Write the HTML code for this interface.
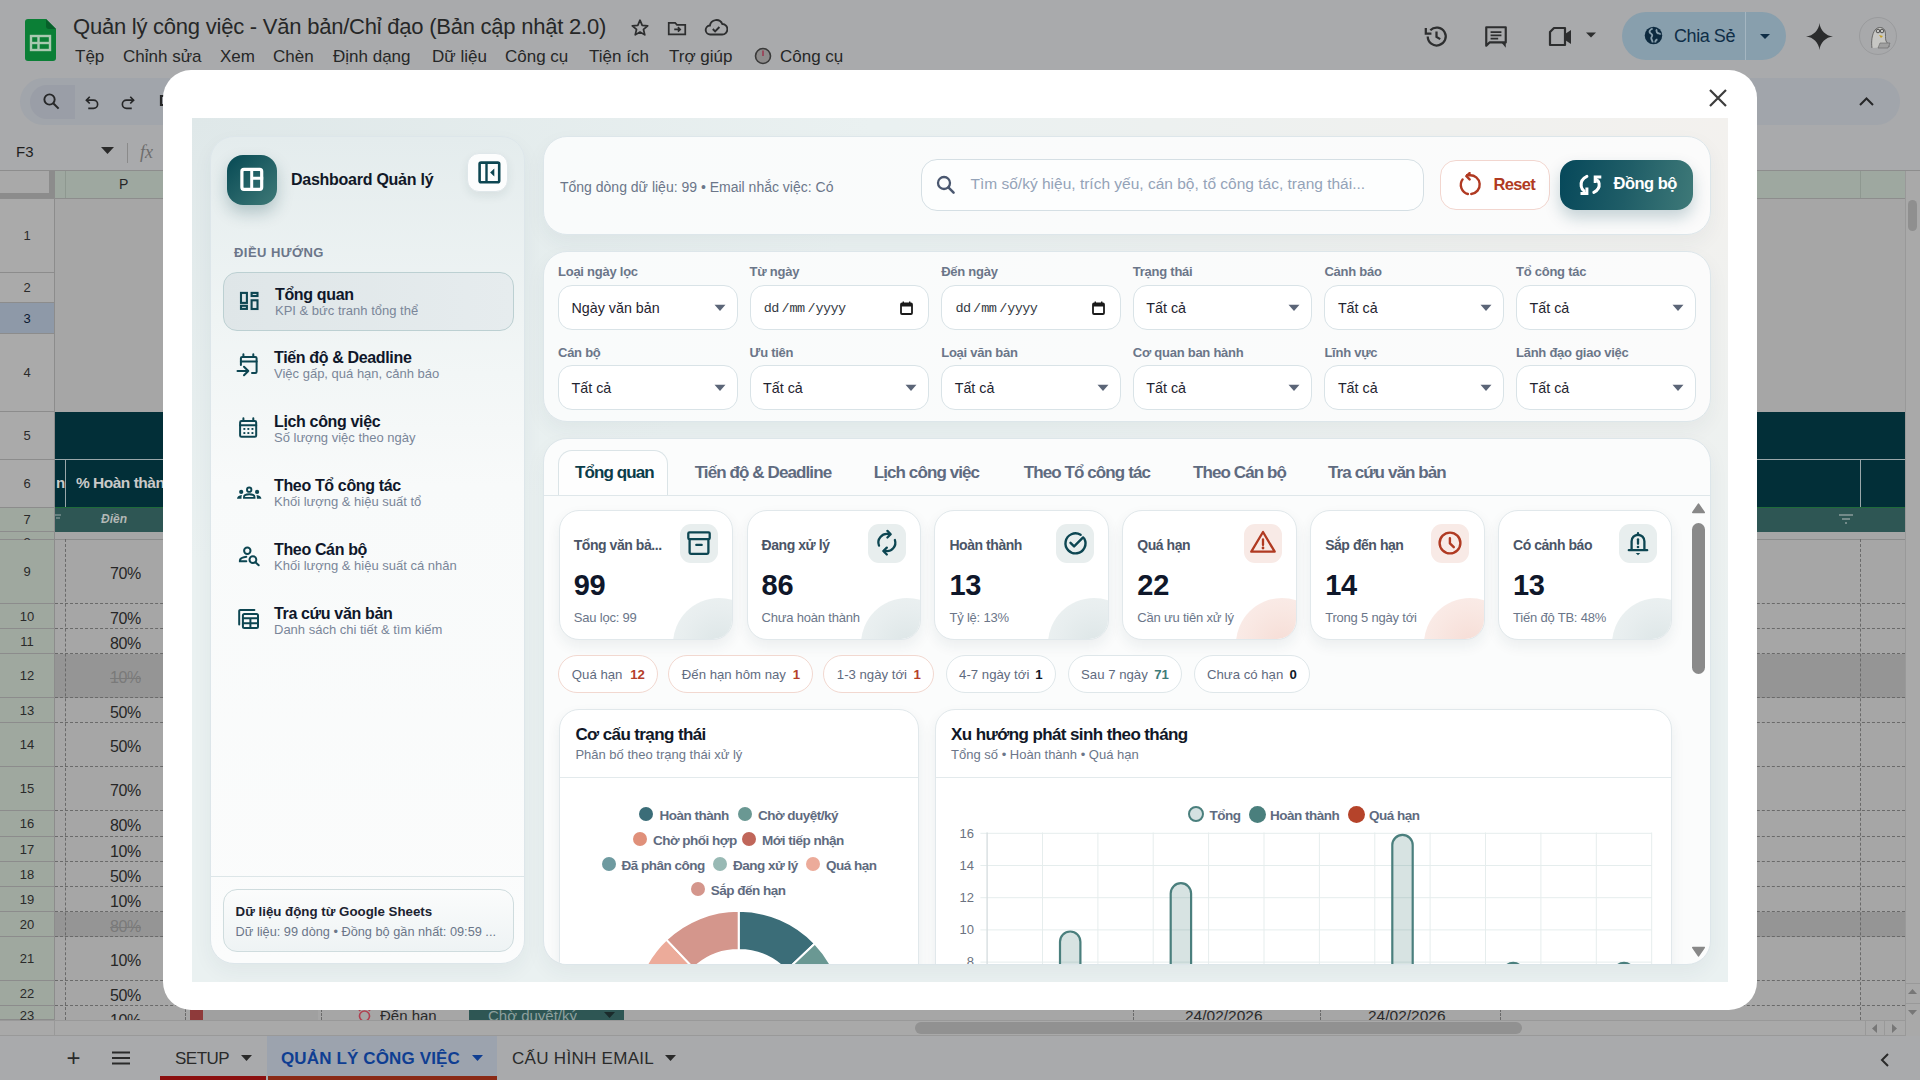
<!DOCTYPE html>
<html><head><meta charset="utf-8">
<style>
*{box-sizing:border-box;margin:0;padding:0}
html,body{width:1920px;height:1080px;overflow:hidden;font-family:"Liberation Sans",sans-serif;background:#a9aaac}
.a{position:absolute}
.t{position:absolute;white-space:nowrap}
#bg{position:absolute;left:0;top:0;width:1920px;height:1080px;background:#a9aaac;overflow:hidden}
.menu{font-size:17px;color:#262727}
#modal{position:absolute;left:163px;top:70px;width:1594px;height:940px;background:#fff;border-radius:28px;overflow:hidden}
#inner{position:absolute;left:29px;top:48px;width:1536px;height:864px;background:radial-gradient(800px 520px at 0% 0%,rgba(223,232,233,1),rgba(223,232,233,0) 85%),radial-gradient(1000px 660px at 100% 0%,rgba(243,241,238,1),rgba(243,241,238,0) 85%),#eaf1f1;overflow:hidden}
.card{position:absolute;border-radius:24px;border:1px solid #dde6ea;box-shadow:0 8px 20px rgba(30,60,70,.05)}
#side{left:18px;top:18px;width:315px;height:828px;background:linear-gradient(180deg,#e4eced 0%,#eff4f4 22%,#f8fafa 42%,#fbfcfc 100%)}
.logo{position:absolute;left:16px;top:18px;width:50px;height:50px;border-radius:16px;background:linear-gradient(135deg,#064954 0%,#3f7977 100%);box-shadow:0 8px 16px rgba(20,70,80,.25)}
.collapse{position:absolute;left:256px;top:16px;width:40.5px;height:39px;border-radius:12px;background:#fcfdfd;border:1px solid #dfe7ea;box-shadow:0 4px 10px rgba(30,60,70,.08)}
.navh{position:absolute;left:23px;top:108px;font-size:13px;font-weight:bold;letter-spacing:0.45px;color:#6b7689}
.nav{position:absolute;left:12px;width:291px;height:59px;border-radius:14px}
.nav.act{background:linear-gradient(90deg,#dfe6e8,#e6ecee);border:1px solid #bcd0d2}
.nav svg{position:absolute;left:16px;top:18px}
.nav .nt{position:absolute;left:51px;top:12.5px;font-size:16px;font-weight:bold;letter-spacing:-0.35px;color:#0f172a;white-space:nowrap}
.nav .ns{position:absolute;left:51px;top:29.5px;font-size:13px;color:#7a8699;white-space:nowrap}
.sfoot{position:absolute;left:0;top:739px;width:313px;height:1px;background:#dde6e8}
.fcard{position:absolute;left:12px;top:752px;width:291px;height:63px;border-radius:14px;border:1px solid #cfdcde;background:linear-gradient(180deg,#fbfcfc,#eef3f4)}
#topc{left:351px;top:18px;width:1168px;height:99px;background:linear-gradient(90deg,#f9fbfb,#fbfbfb)}
#filt{left:351px;top:133px;width:1168px;height:171px;background:linear-gradient(90deg,#f9fbfb,#fbfbfb)}
#tabs{left:351px;top:320px;width:1168px;height:527px;background:#fbfcfc;overflow:hidden}
.flab{position:absolute;font-size:13px;font-weight:bold;letter-spacing:-0.25px;color:#6b7689;white-space:nowrap}
.sel{position:absolute;width:179.6px;height:45px;border-radius:14px;border:1px solid #d9e3e7;background:#fff}
.sel .v{position:absolute;left:12.5px;top:13.5px;font-size:14.3px;color:#1f2430;white-space:nowrap}
.sel .ar{position:absolute;right:11px;top:18px}
.tab{position:absolute;top:23.7px;font-size:17px;font-weight:bold;letter-spacing:-0.9px;color:#5f6b80;white-space:nowrap}
.kpi{position:absolute;top:72px;width:174.4px;height:130px;border-radius:20px;background:#fff;border:1px solid #e1e8eb;box-shadow:0 6px 14px rgba(30,60,70,.07);overflow:hidden}
.kpi .kt{position:absolute;left:14px;top:26px;font-size:14px;font-weight:bold;letter-spacing:-0.45px;color:#4b5567;white-space:nowrap}
.kpi .kn{position:absolute;left:14px;top:58.5px;font-size:29px;font-weight:bold;letter-spacing:-0.3px;color:#0f172a}
.kpi .ks{position:absolute;left:14px;top:99.5px;font-size:13px;letter-spacing:-0.2px;color:#6b7689;white-space:nowrap}
.kpi .ki{position:absolute;left:120.3px;top:13px;width:38px;height:39px;border-radius:11px;background:#e8eeee}
.kpi .ki.r{background:#f8eae6}
.kpi .kc{position:absolute;left:113px;top:87px;width:92px;height:92px;border-radius:50%;background:radial-gradient(circle at 50% 50%,#dde6e7 0%,#e8eeef 55%,#eef3f3 100%)}
.kpi .kc.r{background:radial-gradient(circle at 50% 50%,#f6ddd6 0%,#f9e8e3 55%,#fbefec 100%)}
.chip{position:absolute;top:159.2px;height:38px;border-radius:19px;background:#fff;border:1px solid #dfe7ea;font-size:13.2px;color:#5f6b80;white-space:nowrap;padding:0 0 0 12.5px;line-height:38px}
.chip.r{border-color:#f2d8d0}
.chip b{position:absolute;font-weight:bold}
.ccard{position:absolute;top:271px;height:300px;border-radius:20px;background:#fff;border:1px solid #e1e8eb;box-shadow:0 6px 14px rgba(30,60,70,.07)}
.ccard .ct{position:absolute;left:15.5px;top:15px;font-size:17px;font-weight:bold;letter-spacing:-0.6px;color:#111827;white-space:nowrap}
.ccard .cs{position:absolute;left:15.5px;top:37px;font-size:13px;color:#6b7689;white-space:nowrap}
.ccard .sep{position:absolute;left:0;right:0;top:67px;height:1px;background:#e3eaec}
.lg{position:absolute;margin-top:1.5px;font-size:13.5px;font-weight:bold;letter-spacing:-0.5px;color:#5f6b80;white-space:nowrap}
.dot{position:absolute;width:14px;height:14px;border-radius:50%}

</style></head><body>
<div id="bg">
 <!-- header -->
 <svg class="a" style="left:25px;top:19px" width="31" height="42" viewBox="0 0 31 42"><path d="M3 0h18l10 10v29a3 3 0 0 1-3 3H3a3 3 0 0 1-3-3V3a3 3 0 0 1 3-3z" fill="#0b7f36"/><path d="M21 0l10 10H24a3 3 0 0 1-3-3z" fill="#07602a"/><rect x="6" y="17" width="19" height="14" fill="none" stroke="#a9c9b0" stroke-width="2.4"/><line x1="6" y1="24" x2="25" y2="24" stroke="#a9c9b0" stroke-width="2.4"/><line x1="13.5" y1="17" x2="13.5" y2="31" stroke="#a9c9b0" stroke-width="2.4"/></svg>
 <div class="t" style="left:73px;top:13.5px;font-size:22px;letter-spacing:-0.23px;color:#262727">Quản lý công việc - Văn bản/Chỉ đạo (Bản cập nhật 2.0)</div>
 <svg class="a" style="left:629px;top:17px" width="22" height="22" viewBox="0 0 24 24"><path d="M12 3.5l2.4 5.6 6 .5-4.6 4 1.4 5.9L12 16.4l-5.2 3.1 1.4-5.9-4.6-4 6-.5z" fill="none" stroke="#2d2e2f" stroke-width="1.9" stroke-linejoin="round"/></svg>
 <svg class="a" style="left:666px;top:17px" width="22" height="22" viewBox="0 0 24 24"><path d="M3 6.5V19h18V8.5h-9l-2-2z" fill="none" stroke="#2d2e2f" stroke-width="1.9"/><path d="M9 13.5h6M13 11l2.5 2.5L13 16" fill="none" stroke="#2d2e2f" stroke-width="1.8"/></svg>
 <svg class="a" style="left:704px;top:17px" width="24" height="22" viewBox="0 0 24 22"><path d="M6.5 17.5a4.5 4.5 0 0 1-.6-9A6.5 6.5 0 0 1 18.3 7a4.3 4.3 0 0 1-.3 10.5z" fill="none" stroke="#2d2e2f" stroke-width="1.9"/><path d="M8.8 12l2.3 2.3 4.3-4.3" fill="none" stroke="#2d2e2f" stroke-width="1.9"/></svg>
 <div class="t menu" style="left:75px;top:47px">Tệp</div>
 <div class="t menu" style="left:123px;top:47px">Chỉnh sửa</div>
 <div class="t menu" style="left:220px;top:47px">Xem</div>
 <div class="t menu" style="left:273px;top:47px">Chèn</div>
 <div class="t menu" style="left:333px;top:47px">Định dạng</div>
 <div class="t menu" style="left:432px;top:47px">Dữ liệu</div>
 <div class="t menu" style="left:505px;top:47px">Công cụ</div>
 <div class="t menu" style="left:589px;top:47px">Tiện ích</div>
 <div class="t menu" style="left:669px;top:47px">Trợ giúp</div>
 <svg class="a" style="left:754px;top:47px" width="18" height="18" viewBox="0 0 18 18"><circle cx="9" cy="9" r="7.5" fill="#8e8c8c" stroke="#3a3a3a" stroke-width="1.6"/><path d="M9 3.5V9" stroke="#a02040" stroke-width="1.2"/></svg>
 <div class="t menu" style="left:780px;top:47px">Công cụ</div>
 <!-- right icons -->
 <svg class="a" style="left:1423px;top:23px" width="27" height="27" viewBox="0 0 24 24"><path d="M4.2 12a8 8 0 1 0 2.3-5.6" fill="none" stroke="#2d2e2f" stroke-width="2"/><path d="M2.5 4.5v5h5" fill="none" stroke="#2d2e2f" stroke-width="2" stroke-linejoin="miter"/><path d="M12 7.5V12.3l3.3 2" fill="none" stroke="#2d2e2f" stroke-width="2"/></svg>
 <svg class="a" style="left:1483px;top:24px" width="26" height="26" viewBox="0 0 24 24"><path d="M3 3h18v14H6l-3 3z" fill="none" stroke="#2d2e2f" stroke-width="2" stroke-linejoin="round"/><path d="M7 7.5h10M7 10.5h10M7 13.5h7" stroke="#2d2e2f" stroke-width="1.8"/><path d="M21 17v5l-4-5" fill="#2d2e2f"/></svg>
 <svg class="a" style="left:1547px;top:24px" width="28" height="26" viewBox="0 0 28 26"><path d="M3 8l4-4h11v17H3z" fill="none" stroke="#2d2e2f" stroke-width="2.2" stroke-linejoin="round"/><path d="M18 10l6-4v14l-6-4z" fill="#2d2e2f"/></svg>
 <svg class="a" style="left:1585px;top:31px" width="12" height="8" viewBox="0 0 12 8"><path d="M1 1.5h10L6 6.5z" fill="#2d2e2f"/></svg>
 <div class="a" style="left:1622px;top:12px;width:164px;height:48px;border-radius:24px;background:#889fad"></div>
 <div class="a" style="left:1745px;top:12px;width:1px;height:48px;background:#a5b6c1"></div>
 <svg class="a" style="left:1643px;top:25px" width="21" height="21" viewBox="0 0 24 24"><circle cx="12" cy="12" r="10" fill="#0d2a3f"/><path d="M11 4c-2 1-4 2-3.5 4s2.5 1.5 3 3.5-1.5 2-1 4 1.5 2.5 1.5 4.5M15 5c1 1.5 0 3 1.5 4s3 0 3.5 2M14 20c0-2 1-3 2.5-3.5" stroke="#889fad" stroke-width="2.1" fill="none"/></svg>
 <div class="t" style="left:1674px;top:25.5px;font-size:18px;letter-spacing:-0.43px;color:#0f2e47">Chia Sẻ</div>
 <svg class="a" style="left:1759px;top:33px" width="12" height="7" viewBox="0 0 12 7"><path d="M1 1h10L6 6z" fill="#0f2e47"/></svg>
 <svg class="a" style="left:1806px;top:23px" width="27" height="27" viewBox="0 0 24 24"><path d="M12 0C12.6 6.5 17.5 11.4 24 12 17.5 12.6 12.6 17.5 12 24 11.4 17.5 6.5 12.6 0 12 6.5 11.4 11.4 6.5 12 0z" fill="#2b2c2d"/></svg>
 <div class="a" style="left:1859px;top:17px;width:38px;height:38px;border-radius:50%;background:#a8a9ab;border:1px solid #9a9b9d;overflow:hidden">
  <svg width="38" height="38" viewBox="0 0 38 38"><path d="M12 30c-1-6 0-14 3-18 3-4 9-3 10 1 1 4 0 7 1 10 1 2 3 3 3 6" fill="#c7c7c4" stroke="#555" stroke-width=".8"/><circle cx="18" cy="13" r="1.8" fill="none" stroke="#333" stroke-width=".8"/><circle cx="22" cy="13" r="1.8" fill="none" stroke="#333" stroke-width=".8"/><path d="M19 17l4 1-2 2z" fill="#c9a020"/><path d="M20 25h10l-2 5H18z" fill="#a0a0a0" stroke="#666" stroke-width=".6"/></svg>
 </div>
 <!-- toolbar -->
 <div class="a" style="left:20px;top:78px;width:1880px;height:47px;border-radius:24px;background:#a1a5ab"></div>
 <div class="a" style="left:30px;top:85px;width:45px;height:34px;border-radius:17px 0 0 17px;background:#9a9ea7"></div>
 <svg class="a" style="left:42px;top:92px" width="19" height="19" viewBox="0 0 24 24"><circle cx="9.5" cy="9.5" r="6.5" fill="none" stroke="#262728" stroke-width="2.4"/><path d="M14.5 14.5l6.5 6.5" stroke="#262728" stroke-width="2.6"/></svg>
 <svg class="a" style="left:83px;top:93px" width="18" height="18" viewBox="0 0 24 24"><path d="M9 5L4.5 9.5 9 14" fill="none" stroke="#262728" stroke-width="2.2"/><path d="M5 9.5h9a5.5 5.5 0 0 1 0 11H7" fill="none" stroke="#262728" stroke-width="2.2"/></svg>
 <svg class="a" style="left:119px;top:93px" width="18" height="18" viewBox="0 0 24 24"><path d="M15 5l4.5 4.5L15 14" fill="none" stroke="#262728" stroke-width="2.2"/><path d="M19 9.5h-9a5.5 5.5 0 0 0 0 11h7" fill="none" stroke="#262728" stroke-width="2.2"/></svg>
 <svg class="a" style="left:158px;top:93px" width="10" height="18" viewBox="0 0 10 18"><path d="M9 3H3v9h6" fill="none" stroke="#262728" stroke-width="2.2"/></svg>
 <svg class="a" style="left:1858px;top:96px" width="17" height="11" viewBox="0 0 17 11"><path d="M2 9l6.5-6.5L15 9" fill="none" stroke="#262728" stroke-width="2"/></svg>
 <!-- formula bar -->
 <div class="t" style="left:16px;top:143px;font-size:15px;color:#1f1f1f">F3</div>
 <svg class="a" style="left:101px;top:147px" width="13" height="8" viewBox="0 0 13 8"><path d="M0 0h13L6.5 7z" fill="#2a2a2a"/></svg>
 <div class="a" style="left:127px;top:143px;width:1px;height:20px;background:#8a8a8a"></div>
 <div class="t" style="left:140px;top:142px;font-size:18px;font-style:italic;font-family:'Liberation Serif',serif;color:#6d6d6d">fx</div>
 <!-- column header -->
 <div class="a" style="left:0;top:170px;width:1920px;height:1px;background:#8d8d8d"></div>
 <div class="a" style="left:0;top:171px;width:49px;height:22px;background:#a9a9a9"></div>
 <div class="a" style="left:49px;top:171px;width:6px;height:28px;background:#8c8c8c"></div>
 <div class="a" style="left:0;top:193px;width:55px;height:6px;background:#8c8c8c"></div>
 <div class="a" style="left:55px;top:171px;width:1850px;height:27px;background:#9ea8a0"></div>
 <div class="a" style="left:65px;top:171px;width:1px;height:27px;background:#8e9890"></div>
 <div class="a" style="left:1860px;top:171px;width:1px;height:27px;background:#8e9890"></div>
 <div class="t" style="left:119px;top:176px;font-size:14px;color:#262626">P</div>
 <div class="a" style="left:0;top:198px;width:1905px;height:1px;background:#8d8d8d"></div>
 <!-- vertical scrollbar -->
 <div class="a" style="left:1905px;top:171px;width:15px;height:865px;background:#a9a9a9;border-left:1px solid #999"></div>
 <div class="a" style="left:1908px;top:200px;width:9px;height:31px;border-radius:5px;background:#8f8f8f"></div>
 <div class="a" style="left:1905px;top:983px;width:15px;height:1px;background:#999"></div>
 <div class="a" style="left:1905px;top:1003px;width:15px;height:1px;background:#999"></div>
 <svg class="a" style="left:1908px;top:989px" width="9" height="6"><path d="M0 5h9L4.5 0z" fill="#777"/></svg>
 <svg class="a" style="left:1908px;top:1010px" width="9" height="6"><path d="M0 0h9L4.5 5z" fill="#777"/></svg>
 <div class="a" style="left:0;top:199px;width:54px;height:74px;background:#aaaaaa;border-bottom:1px solid #8c8c8c"></div>
<div class="t rnl" style="left:0;top:199px;width:54px;height:74px;line-height:74px;text-align:center;font-size:13px;color:#2a2a2a">1</div>
<div class="a" style="left:55px;top:199px;width:1850px;height:74px;background:#a6a6a6;"></div>
<div class="a" style="left:0;top:273px;width:54px;height:30px;background:#aaaaaa;border-bottom:1px solid #8c8c8c"></div>
<div class="t rnl" style="left:0;top:273px;width:54px;height:30px;line-height:30px;text-align:center;font-size:13px;color:#2a2a2a">2</div>
<div class="a" style="left:55px;top:273px;width:1850px;height:30px;background:#a6a6a6;"></div>
<div class="a" style="left:0;top:303px;width:54px;height:31px;background:#8e99a8;border-bottom:1px solid #8c8c8c"></div>
<div class="t rnl" style="left:0;top:303px;width:54px;height:31px;line-height:31px;text-align:center;font-size:13px;color:#0d1a33">3</div>
<div class="a" style="left:55px;top:303px;width:1850px;height:31px;background:#a6a6a6;"></div>
<div class="a" style="left:0;top:334px;width:54px;height:78px;background:#aaaaaa;border-bottom:1px solid #8c8c8c"></div>
<div class="t rnl" style="left:0;top:334px;width:54px;height:78px;line-height:78px;text-align:center;font-size:13px;color:#2a2a2a">4</div>
<div class="a" style="left:55px;top:334px;width:1850px;height:78px;background:#a6a6a6;"></div>
<div class="a" style="left:0;top:412px;width:54px;height:48px;background:#aaaaaa;border-bottom:1px solid #8c8c8c"></div>
<div class="t rnl" style="left:0;top:412px;width:54px;height:48px;line-height:48px;text-align:center;font-size:13px;color:#2a2a2a">5</div>
<div class="a" style="left:55px;top:412px;width:1850px;height:48px;background:#022f38;border-bottom:1px solid #9aa7aa;"></div>
<div class="a" style="left:0;top:460px;width:54px;height:48px;background:#aaaaaa;border-bottom:1px solid #8c8c8c"></div>
<div class="t rnl" style="left:0;top:460px;width:54px;height:48px;line-height:48px;text-align:center;font-size:13px;color:#2a2a2a">6</div>
<div class="a" style="left:55px;top:460px;width:1850px;height:48px;background:#022f38;border-bottom:1px solid #1f6b3a;"></div>
<div class="a" style="left:0;top:508px;width:54px;height:24px;background:#9fa89f;border-bottom:1px solid #8c8c8c"></div>
<div class="t rnl" style="left:0;top:508px;width:54px;height:24px;line-height:24px;text-align:center;font-size:13px;color:#2a2a2a">7</div>
<div class="a" style="left:55px;top:508px;width:1850px;height:24px;background:#2e5654;"></div>
<div class="a" style="left:0;top:532px;width:54px;height:8px;background:#9fa89f;border-bottom:1px solid #8c8c8c"></div>
<div class="t" style="left:0;top:532px;width:54px;height:8px;overflow:hidden;text-align:center;font-size:13px;color:#2a2a2a;line-height:22px">8</div>
<div class="a" style="left:55px;top:532px;width:1850px;height:8px;background:#a6a6a6;border-bottom:1px solid #8c8c8c;"></div>
<div class="a" style="left:0;top:540px;width:54px;height:64px;background:#9fa89f;border-bottom:1px solid #8c8c8c"></div>
<div class="t rnl" style="left:0;top:540px;width:54px;height:64px;line-height:64px;text-align:center;font-size:13px;color:#2a2a2a">9</div>
<div class="a" style="left:55px;top:540px;width:1850px;height:64px;background:#a6a6a6;border-bottom:1px dashed #6a6a6a;"></div>
<div class="t" style="left:77px;top:541.5px;width:97px;height:64px;overflow:hidden;line-height:64px;text-align:center;font-size:16px;letter-spacing:-0.4px;color:#262626;">70%</div>
<div class="a" style="left:0;top:604px;width:54px;height:25px;background:#9fa89f;border-bottom:1px solid #8c8c8c"></div>
<div class="t rnl" style="left:0;top:604px;width:54px;height:25px;line-height:25px;text-align:center;font-size:13px;color:#2a2a2a">10</div>
<div class="a" style="left:55px;top:604px;width:1850px;height:25px;background:#a6a6a6;border-bottom:1px dashed #6a6a6a;"></div>
<div class="t" style="left:77px;top:605.5px;width:97px;height:25px;overflow:hidden;line-height:25px;text-align:center;font-size:16px;letter-spacing:-0.4px;color:#262626;">70%</div>
<div class="a" style="left:0;top:629px;width:54px;height:25px;background:#9fa89f;border-bottom:1px solid #8c8c8c"></div>
<div class="t rnl" style="left:0;top:629px;width:54px;height:25px;line-height:25px;text-align:center;font-size:13px;color:#2a2a2a">11</div>
<div class="a" style="left:55px;top:629px;width:1850px;height:25px;background:#a6a6a6;border-bottom:1px dashed #6a6a6a;"></div>
<div class="t" style="left:77px;top:630.5px;width:97px;height:25px;overflow:hidden;line-height:25px;text-align:center;font-size:16px;letter-spacing:-0.4px;color:#262626;">80%</div>
<div class="a" style="left:0;top:654px;width:54px;height:44px;background:#9fa89f;border-bottom:1px solid #8c8c8c"></div>
<div class="t rnl" style="left:0;top:654px;width:54px;height:44px;line-height:44px;text-align:center;font-size:13px;color:#2a2a2a">12</div>
<div class="a" style="left:55px;top:654px;width:1850px;height:44px;background:#959595;border-bottom:1px dashed #6a6a6a;"></div>
<div class="t" style="left:77px;top:655.5px;width:97px;height:44px;overflow:hidden;line-height:44px;text-align:center;font-size:16px;letter-spacing:-0.4px;text-decoration:line-through;color:#7a7a7a;">10%</div>
<div class="a" style="left:0;top:698px;width:54px;height:25px;background:#9fa89f;border-bottom:1px solid #8c8c8c"></div>
<div class="t rnl" style="left:0;top:698px;width:54px;height:25px;line-height:25px;text-align:center;font-size:13px;color:#2a2a2a">13</div>
<div class="a" style="left:55px;top:698px;width:1850px;height:25px;background:#a6a6a6;border-bottom:1px dashed #6a6a6a;"></div>
<div class="t" style="left:77px;top:699.5px;width:97px;height:25px;overflow:hidden;line-height:25px;text-align:center;font-size:16px;letter-spacing:-0.4px;color:#262626;">50%</div>
<div class="a" style="left:0;top:723px;width:54px;height:44px;background:#9fa89f;border-bottom:1px solid #8c8c8c"></div>
<div class="t rnl" style="left:0;top:723px;width:54px;height:44px;line-height:44px;text-align:center;font-size:13px;color:#2a2a2a">14</div>
<div class="a" style="left:55px;top:723px;width:1850px;height:44px;background:#a6a6a6;border-bottom:1px dashed #6a6a6a;"></div>
<div class="t" style="left:77px;top:724.5px;width:97px;height:44px;overflow:hidden;line-height:44px;text-align:center;font-size:16px;letter-spacing:-0.4px;color:#262626;">50%</div>
<div class="a" style="left:0;top:767px;width:54px;height:44px;background:#9fa89f;border-bottom:1px solid #8c8c8c"></div>
<div class="t rnl" style="left:0;top:767px;width:54px;height:44px;line-height:44px;text-align:center;font-size:13px;color:#2a2a2a">15</div>
<div class="a" style="left:55px;top:767px;width:1850px;height:44px;background:#a6a6a6;border-bottom:1px dashed #6a6a6a;"></div>
<div class="t" style="left:77px;top:768.5px;width:97px;height:44px;overflow:hidden;line-height:44px;text-align:center;font-size:16px;letter-spacing:-0.4px;color:#262626;">70%</div>
<div class="a" style="left:0;top:811px;width:54px;height:26px;background:#9fa89f;border-bottom:1px solid #8c8c8c"></div>
<div class="t rnl" style="left:0;top:811px;width:54px;height:26px;line-height:26px;text-align:center;font-size:13px;color:#2a2a2a">16</div>
<div class="a" style="left:55px;top:811px;width:1850px;height:26px;background:#a6a6a6;border-bottom:1px dashed #6a6a6a;"></div>
<div class="t" style="left:77px;top:812.5px;width:97px;height:26px;overflow:hidden;line-height:26px;text-align:center;font-size:16px;letter-spacing:-0.4px;color:#262626;">80%</div>
<div class="a" style="left:0;top:837px;width:54px;height:25px;background:#9fa89f;border-bottom:1px solid #8c8c8c"></div>
<div class="t rnl" style="left:0;top:837px;width:54px;height:25px;line-height:25px;text-align:center;font-size:13px;color:#2a2a2a">17</div>
<div class="a" style="left:55px;top:837px;width:1850px;height:25px;background:#a6a6a6;border-bottom:1px dashed #6a6a6a;"></div>
<div class="t" style="left:77px;top:838.5px;width:97px;height:25px;overflow:hidden;line-height:25px;text-align:center;font-size:16px;letter-spacing:-0.4px;color:#262626;">10%</div>
<div class="a" style="left:0;top:862px;width:54px;height:25px;background:#9fa89f;border-bottom:1px solid #8c8c8c"></div>
<div class="t rnl" style="left:0;top:862px;width:54px;height:25px;line-height:25px;text-align:center;font-size:13px;color:#2a2a2a">18</div>
<div class="a" style="left:55px;top:862px;width:1850px;height:25px;background:#a6a6a6;border-bottom:1px dashed #6a6a6a;"></div>
<div class="t" style="left:77px;top:863.5px;width:97px;height:25px;overflow:hidden;line-height:25px;text-align:center;font-size:16px;letter-spacing:-0.4px;color:#262626;">50%</div>
<div class="a" style="left:0;top:887px;width:54px;height:25px;background:#9fa89f;border-bottom:1px solid #8c8c8c"></div>
<div class="t rnl" style="left:0;top:887px;width:54px;height:25px;line-height:25px;text-align:center;font-size:13px;color:#2a2a2a">19</div>
<div class="a" style="left:55px;top:887px;width:1850px;height:25px;background:#a6a6a6;border-bottom:1px dashed #6a6a6a;"></div>
<div class="t" style="left:77px;top:888.5px;width:97px;height:25px;overflow:hidden;line-height:25px;text-align:center;font-size:16px;letter-spacing:-0.4px;color:#262626;">10%</div>
<div class="a" style="left:0;top:912px;width:54px;height:25px;background:#9fa89f;border-bottom:1px solid #8c8c8c"></div>
<div class="t rnl" style="left:0;top:912px;width:54px;height:25px;line-height:25px;text-align:center;font-size:13px;color:#2a2a2a">20</div>
<div class="a" style="left:55px;top:912px;width:1850px;height:25px;background:#959595;border-bottom:1px dashed #6a6a6a;"></div>
<div class="t" style="left:77px;top:913.5px;width:97px;height:25px;overflow:hidden;line-height:25px;text-align:center;font-size:16px;letter-spacing:-0.4px;text-decoration:line-through;color:#7a7a7a;">80%</div>
<div class="a" style="left:0;top:937px;width:54px;height:44px;background:#9fa89f;border-bottom:1px solid #8c8c8c"></div>
<div class="t rnl" style="left:0;top:937px;width:54px;height:44px;line-height:44px;text-align:center;font-size:13px;color:#2a2a2a">21</div>
<div class="a" style="left:55px;top:937px;width:1850px;height:44px;background:#a6a6a6;border-bottom:1px dashed #6a6a6a;"></div>
<div class="t" style="left:77px;top:938.5px;width:97px;height:44px;overflow:hidden;line-height:44px;text-align:center;font-size:16px;letter-spacing:-0.4px;color:#262626;">10%</div>
<div class="a" style="left:0;top:981px;width:54px;height:25px;background:#9fa89f;border-bottom:1px solid #8c8c8c"></div>
<div class="t rnl" style="left:0;top:981px;width:54px;height:25px;line-height:25px;text-align:center;font-size:13px;color:#2a2a2a">22</div>
<div class="a" style="left:55px;top:981px;width:1850px;height:25px;background:#a6a6a6;border-bottom:1px dashed #6a6a6a;"></div>
<div class="t" style="left:77px;top:982.5px;width:97px;height:25px;overflow:hidden;line-height:25px;text-align:center;font-size:16px;letter-spacing:-0.4px;color:#262626;">50%</div>
<div class="a" style="left:0;top:1006px;width:54px;height:14px;background:#9fa89f;border-bottom:1px solid #8c8c8c"></div>
<div class="t rnl" style="left:0;top:1008px;width:54px;text-align:center;font-size:13px;color:#2a2a2a;height:12px;overflow:hidden">23</div>
<div class="a" style="left:55px;top:1006px;width:1850px;height:14px;background:#a6a6a6;"></div>
<div class="t" style="left:77px;top:1007.5px;width:97px;height:12.5px;overflow:hidden;line-height:25px;text-align:center;font-size:16px;letter-spacing:-0.4px;color:#262626;">10%</div>
<div class="a" style="left:54px;top:199px;width:1px;height:821px;background:#8c8c8c"></div>
<div class="a" style="left:65px;top:539px;width:0;height:481px;border-left:1px dashed #6a6a6a"></div>
<div class="a" style="left:1860px;top:539px;width:0;height:481px;border-left:1px dashed #6a6a6a"></div>
<div class="a" style="left:65px;top:459px;width:1px;height:48px;background:#9aa7aa"></div>
<div class="a" style="left:1860px;top:459px;width:1px;height:48px;background:#9aa7aa"></div>
<div class="t" style="left:56px;top:474px;font-size:15px;font-weight:bold;color:#c9c9c9">n</div>
<div class="t" style="left:76px;top:474px;font-size:15.5px;font-weight:bold;letter-spacing:-0.5px;color:#c9c9c9">% Hoàn thàn</div>
<div class="t" style="left:101px;top:512px;font-size:12px;font-weight:bold;font-style:italic;color:#b3b8b6">Điền</div>
<svg class="a" style="left:55px;top:514px" width="6" height="8"><path d="M0 1h6M1 4h4" stroke="#9aa" stroke-width="1.2"/></svg>
<svg class="a" style="left:1839px;top:514px" width="14" height="10"><path d="M0 1h14M3 5h8M6 9h2" stroke="#8a9c9a" stroke-width="1.5"/></svg>
<div class="a" style="left:190px;top:1008px;width:13px;height:12px;background:#8e3a3a"></div>
<div class="a" style="left:203px;top:1008px;width:115px;height:12px;background:#a0a0a0"></div>
<svg class="a" style="left:357px;top:1008px" width="15" height="12"><circle cx="7.5" cy="8" r="5" fill="none" stroke="#b04050" stroke-width="1.6"/><path d="M2 3l2-2M13 3l-2-2" stroke="#b04050" stroke-width="1.6"/></svg>
<div class="t" style="left:380px;top:1006px;font-size:15px;color:#2a2a2a;height:14px;overflow:hidden;line-height:20px">Đến hạn</div>
<div class="a" style="left:469px;top:1008px;width:155px;height:12px;background:#2e5654"></div>
<div class="t" style="left:488px;top:1006px;font-size:15px;color:#8da09e;height:14px;overflow:hidden;line-height:20px">Chờ duyệt/ký</div>
<svg class="a" style="left:604px;top:1012px" width="11" height="6"><path d="M0 0h11L5.5 6z" fill="#1a2a2a"/></svg>
<div class="t" style="left:1185px;top:1006px;font-size:15.5px;color:#2a2a2a;height:14px;overflow:hidden;line-height:20px">24/02/2026</div>
<div class="t" style="left:1368px;top:1006px;font-size:15.5px;color:#2a2a2a;height:14px;overflow:hidden;line-height:20px">24/02/2026</div>
<div class="a" style="left:185px;top:1005px;width:0;height:15px;border-left:1px dashed #6a6a6a"></div>
<div class="a" style="left:321px;top:1005px;width:0;height:15px;border-left:1px dashed #6a6a6a"></div>
<div class="a" style="left:1133px;top:1005px;width:0;height:15px;border-left:1px dashed #6a6a6a"></div>
<div class="a" style="left:1320px;top:1005px;width:0;height:15px;border-left:1px dashed #6a6a6a"></div>
<div class="a" style="left:1500px;top:1005px;width:0;height:15px;border-left:1px dashed #6a6a6a"></div>

 <!-- horizontal scrollbar -->
 <div class="a" style="left:0;top:1020px;width:1905px;height:16px;background:#a9a9a9;border-top:1px solid #999;border-bottom:1px solid #999"></div>
 <div class="a" style="left:54px;top:1021px;width:1px;height:14px;background:#999"></div>
 <div class="a" style="left:915px;top:1022px;width:607px;height:12px;border-radius:6px;background:#919191"></div>
 <div class="a" style="left:1865px;top:1021px;width:1px;height:14px;background:#999"></div>
 <div class="a" style="left:1884px;top:1021px;width:1px;height:14px;background:#999"></div>
 <svg class="a" style="left:1872px;top:1024px" width="6" height="9"><path d="M5 0v9L0 4.5z" fill="#777"/></svg>
 <svg class="a" style="left:1892px;top:1024px" width="6" height="9"><path d="M0 0v9l5-4.5z" fill="#777"/></svg>
 <!-- tabs -->
 <div class="t" style="left:66.5px;top:1044px;font-size:24px;color:#2a2a2a;font-weight:300">+</div>
 <svg class="a" style="left:112px;top:1051px" width="18" height="14"><path d="M0 1.5h18M0 7h18M0 12.5h18" stroke="#2a2a2a" stroke-width="2"/></svg>
 <div class="t" style="left:175px;top:1049px;font-size:17px;color:#2a2a2a;letter-spacing:-0.5px">SETUP</div>
 <svg class="a" style="left:241px;top:1055px" width="11" height="6"><path d="M0 0h11L5.5 6z" fill="#2a2a2a"/></svg>
 <div class="a" style="left:160px;top:1076px;width:106px;height:4px;background:#8b0f0f"></div>
 <div class="a" style="left:267px;top:1036px;width:230px;height:40px;background:#9ca3ae"></div>
 <div class="a" style="left:268px;top:1076px;width:229px;height:4px;background:#8a2a16"></div>
 <div class="t" style="left:281px;top:1049px;font-size:17px;color:#0f3e92;font-weight:bold;letter-spacing:.14px">QUẢN LÝ CÔNG VIỆC</div>
 <svg class="a" style="left:472px;top:1055px" width="11" height="6"><path d="M0 0h11L5.5 6z" fill="#0f3e92"/></svg>
 <div class="t" style="left:512px;top:1049px;font-size:17px;color:#2a2a2a;letter-spacing:.3px">CẤU HÌNH EMAIL</div>
 <svg class="a" style="left:665px;top:1055px" width="11" height="6"><path d="M0 0h11L5.5 6z" fill="#2a2a2a"/></svg>
 <svg class="a" style="left:1880px;top:1053px" width="9" height="14"><path d="M8 1L2 7l6 6" fill="none" stroke="#2a2a2a" stroke-width="2"/></svg>
</div>

<div id="modal">
<svg class="a" style="left:1545px;top:18px" width="20" height="20" viewBox="0 0 20 20"><path d="M2 2l16 16M18 2L2 18" stroke="#3c3c3c" stroke-width="2.2"/></svg>
<div id="inner">
<!-- SIDEBAR -->
<div class="card" id="side">
 <div class="logo"><svg class="a" style="left:0;top:0" width="50" height="50" viewBox="0 0 50 50"><rect x="14.9" y="14.4" width="19.8" height="19.9" rx="2" fill="none" stroke="#fff" stroke-width="3.2"/><path d="M24.7 13v22.8M24.7 23.3h11.5" stroke="#fff" stroke-width="3"/></svg></div>
 <div class="t" style="left:80px;top:34px;font-size:16px;font-weight:bold;letter-spacing:-0.26px;color:#111827">Dashboard Quản lý</div>
 <div class="collapse"><svg class="a" style="left:10px;top:7px" width="24" height="24" viewBox="0 0 24 24"><rect x="1.6" y="1.6" width="19.6" height="19.6" rx="1.5" fill="none" stroke="#0d4652" stroke-width="2.6"/><path d="M8.5 1.5v20" stroke="#0d4652" stroke-width="2.4"/><path d="M16.3 7.6v7.8l-4.2-3.9z" fill="#0d4652"/></svg></div>
 <div class="navh">ĐIỀU HƯỚNG</div>
 <div class="nav act" style="top:135px">
  <svg width="24" height="24" viewBox="0 0 24 24" style="left:15px;top:17px"><g fill="none" stroke="#0d4652" stroke-width="2.1"><rect x="2" y="2.9" width="5.9" height="10"/><rect x="12.6" y="2.9" width="5.9" height="3.1"/><rect x="2" y="15.8" width="5.9" height="3.1"/><rect x="12.6" y="10.3" width="5.9" height="8.7"/></g></svg>
  <div class="nt">Tổng quan</div><div class="ns">KPI &amp; bức tranh tổng thể</div>
 </div>
 <div class="nav" style="top:199px">
  <svg width="24" height="26" viewBox="0 0 24 26" style="left:13px;top:16px"><g fill="none" stroke="#0d4652" stroke-width="2" stroke-linecap="round" stroke-linejoin="round"><path d="M4.9 13V6.3a1.3 1.3 0 0 1 1.3-1.3h13.1a1.3 1.3 0 0 1 1.3 1.3v13.4a1.3 1.3 0 0 1-1.3 1.3H16"/><path d="M4.9 9.6h15.7M7.4 2.3v2.5M17.3 2.3v2.5"/><path d="M1.5 19H12.3M8 14.7L12.3 19L8 23.3"/></g></svg>
  <div class="nt">Tiến độ &amp; Deadline</div><div class="ns">Việc gấp, quá hạn, cảnh báo</div>
 </div>
 <div class="nav" style="top:263px">
  <svg width="24" height="24" viewBox="0 0 24 24" style="left:15px;top:16px"><g fill="none" stroke="#0d4652" stroke-width="2" stroke-linecap="round"><rect x="2.1" y="5" width="16.1" height="15.8" rx="1.4"/><path d="M2.1 9.3h16.1M5.4 2.2v2.6M15.3 2.2v2.6"/></g><g fill="#0d4652"><rect x="5.4" y="12" width="1.9" height="1.9"/><rect x="9.4" y="12" width="1.9" height="1.9"/><rect x="13.5" y="12" width="1.9" height="1.9"/><rect x="5.4" y="16.1" width="1.9" height="1.9"/><rect x="9.4" y="16.1" width="1.9" height="1.9"/><rect x="13.5" y="16.1" width="1.9" height="1.9"/></g></svg>
  <div class="nt">Lịch công việc</div><div class="ns">Số lượng việc theo ngày</div>
 </div>
 <div class="nav" style="top:327px">
  <svg width="28" height="24" viewBox="0 0 28 24" style="left:13px;top:16px"><g fill="#0d4652"><circle cx="5.2" cy="11.9" r="2.1"/><circle cx="21.1" cy="11.9" r="2.1"/><path d="M1 18.8C1 17 2.6 15.3 6 15c-.5 1-.5 2.4-.5 3.8z"/><path d="M25.4 18.8c0-1.8-1.6-3.5-5-3.8.5 1 .5 2.4.5 3.8z"/></g><g fill="none" stroke="#0d4652" stroke-width="1.9"><circle cx="13.2" cy="9.7" r="2.2"/><path d="M8 17.9v-.8c0-1.6 2.2-2.8 5.2-2.8s5.3 1.2 5.3 2.8v.8z"/></g></svg>
  <div class="nt">Theo Tổ công tác</div><div class="ns">Khối lượng &amp; hiệu suất tổ</div>
 </div>
 <div class="nav" style="top:391px">
  <svg width="24" height="24" viewBox="0 0 24 24" style="left:15px;top:16px"><g fill="none" stroke="#0d4652" stroke-width="2" stroke-linecap="round"><circle cx="9.3" cy="6.7" r="3.2"/><path d="M8.3 12.8C4.2 13.4 1.9 14.8 1.9 16.6v.7h6.4"/><circle cx="14.9" cy="15.7" r="3.4"/><path d="M17.4 18.2l3.3 3.1"/></g></svg>
  <div class="nt">Theo Cán bộ</div><div class="ns">Khối lượng &amp; hiệu suất cá nhân</div>
 </div>
 <div class="nav" style="top:455px">
  <svg width="24" height="24" viewBox="0 0 24 24" style="left:15px;top:16px"><g fill="none" stroke="#0d4652" stroke-width="2" stroke-linecap="round"><path d="M1.2 16.4V3a1 1 0 0 1 1-1H16.4"/><rect x="4.9" y="6" width="15.1" height="14.1" rx="1.5"/><path d="M4.9 10.3h15.1M4.9 15.2h15.1M12.4 10.3v9.8"/></g></svg>
  <div class="nt">Tra cứu văn bản</div><div class="ns">Danh sách chi tiết &amp; tìm kiếm</div>
 </div>
 <div class="sfoot"></div>
 <div class="fcard">
  <div class="t" style="left:11.6px;top:13.5px;font-size:13.3px;font-weight:bold;color:#1c2230">Dữ liệu động từ Google Sheets</div>
  <div class="t" style="left:11.6px;top:34px;font-size:12.75px;color:#6b7689">Dữ liệu: 99 dòng • Đồng bộ gần nhất: 09:59 ...</div>
 </div>
</div>

<!-- TOP BAR -->
<div class="card" id="topc">
 <div class="t" style="left:16px;top:42px;font-size:14px;color:#6b7689">Tổng dòng dữ liệu: 99 • Email nhắc việc: Có</div>
 <div class="a" style="left:377px;top:22px;width:503px;height:52px;border-radius:16px;border:1px solid #d5dfe4;background:#fdfefe">
  <svg class="a" style="left:13px;top:14px" width="22" height="22" viewBox="0 0 22 22"><circle cx="9" cy="9" r="6" fill="none" stroke="#4b5870" stroke-width="2.3"/><path d="M13.4 13.4l5.2 5.2" stroke="#4b5870" stroke-width="2.5" stroke-linecap="round"/></svg>
  <div class="t" style="left:48.5px;top:15.4px;font-size:15.5px;color:#94a3b8">Tìm số/ký hiệu, trích yếu, cán bộ, tổ công tác, trạng thái...</div>
 </div>
 <div class="a" style="left:896px;top:23px;width:110px;height:50px;border-radius:16px;border:1px solid #f2d6cf;background:#fff">
  <svg class="a" style="left:16px;top:11.3px" width="26" height="26" viewBox="0 0 26 26"><g fill="none" stroke="#b03a22" stroke-width="2.4" stroke-linecap="round" stroke-linejoin="round"><path d="M5.6 7.4A9.4 9.4 0 0 0 10.9 22"/><path d="M14.2 22A9.2 9.2 0 0 0 12.4 3.3H10"/><path d="M12.6 1L9.4 4.2l3.2 3.2"/></g></svg>
  <div class="t" style="left:52.5px;top:14.3px;font-size:16.5px;font-weight:bold;letter-spacing:-0.65px;color:#b03a22">Reset</div>
 </div>
 <div class="a" style="left:1016px;top:23px;width:133px;height:50px;border-radius:16px;background:linear-gradient(100deg,#06485a 0%,#1f5d67 50%,#3e7978 100%);box-shadow:0 8px 16px rgba(10,70,85,.22)">
  <svg class="a" style="left:17px;top:13px" width="27" height="24" viewBox="0 0 27 24"><g fill="none" stroke="#fff" stroke-width="3" stroke-linecap="round" stroke-linejoin="miter"><path d="M9.9 3.4C5.5 5.5 3.6 9.5 4.2 13.2 4.6 15.5 5.7 17.2 7.1 18.1"/><path d="M3.5 20.6H9.9V14.6" stroke-linecap="butt"/><path d="M16.8 19.4C20.8 17.4 22.6 13.7 22.1 10.4 21.8 8.7 20.6 7.2 18.8 6.4"/><path d="M24.3 4.1H18.2V10.1" stroke-linecap="butt"/></g></svg>
  <div class="t" style="left:53.5px;top:14.3px;font-size:16.5px;font-weight:bold;letter-spacing:-0.5px;color:#fff">Đồng bộ</div>
 </div>
</div>

<!-- FILTERS -->
<div class="card" id="filt">
<div class="flab" style="left:14.0px;top:12px">Loại ngày lọc</div>
<div class="sel" style="left:14.0px;top:33px"><div class="v">Ngày văn bản</div><svg class="ar" width="12" height="8" viewBox="0 0 12 8"><path d="M0.5 0.8h11L6 7z" fill="#5b6577"/></svg></div>
<div class="flab" style="left:14.0px;top:92.5px">Cán bộ</div>
<div class="sel" style="left:14.0px;top:113px"><div class="v">Tất cả</div><svg class="ar" width="12" height="8" viewBox="0 0 12 8"><path d="M0.5 0.8h11L6 7z" fill="#5b6577"/></svg></div>
<div class="flab" style="left:205.6px;top:12px">Từ ngày</div>
<div class="sel" style="left:205.6px;top:33px"><div class="t" style="left:13.2px;top:15px;font-size:13.5px;font-family:'Liberation Mono',monospace;letter-spacing:-0.6px;color:#363c45">dd</div><div class="t" style="left:30.8px;top:15px;font-size:13.5px;font-family:'Liberation Mono',monospace;letter-spacing:-0.6px;color:#363c45">/</div><div class="t" style="left:39px;top:15px;font-size:13.5px;font-family:'Liberation Mono',monospace;letter-spacing:-0.6px;color:#363c45">mm</div><div class="t" style="left:57px;top:15px;font-size:13.5px;font-family:'Liberation Mono',monospace;letter-spacing:-0.6px;color:#363c45">/</div><div class="t" style="left:65px;top:15px;font-size:13.5px;font-family:'Liberation Mono',monospace;letter-spacing:-0.6px;color:#363c45">yyyy</div><svg class="a" style="left:149.5px;top:14.5px" width="13" height="14" viewBox="0 0 13 14"><rect x="1" y="2.5" width="11" height="10.5" rx="1" fill="none" stroke="#1a1a1a" stroke-width="1.8"/><rect x="1" y="2.5" width="11" height="3" fill="#1a1a1a"/><path d="M3.3 0.6v2M9.7 0.6v2" stroke="#1a1a1a" stroke-width="1.4"/></svg></div>
<div class="flab" style="left:205.6px;top:92.5px">Ưu tiên</div>
<div class="sel" style="left:205.6px;top:113px"><div class="v">Tất cả</div><svg class="ar" width="12" height="8" viewBox="0 0 12 8"><path d="M0.5 0.8h11L6 7z" fill="#5b6577"/></svg></div>
<div class="flab" style="left:397.2px;top:12px">Đến ngày</div>
<div class="sel" style="left:397.2px;top:33px"><div class="t" style="left:13.2px;top:15px;font-size:13.5px;font-family:'Liberation Mono',monospace;letter-spacing:-0.6px;color:#363c45">dd</div><div class="t" style="left:30.8px;top:15px;font-size:13.5px;font-family:'Liberation Mono',monospace;letter-spacing:-0.6px;color:#363c45">/</div><div class="t" style="left:39px;top:15px;font-size:13.5px;font-family:'Liberation Mono',monospace;letter-spacing:-0.6px;color:#363c45">mm</div><div class="t" style="left:57px;top:15px;font-size:13.5px;font-family:'Liberation Mono',monospace;letter-spacing:-0.6px;color:#363c45">/</div><div class="t" style="left:65px;top:15px;font-size:13.5px;font-family:'Liberation Mono',monospace;letter-spacing:-0.6px;color:#363c45">yyyy</div><svg class="a" style="left:149.5px;top:14.5px" width="13" height="14" viewBox="0 0 13 14"><rect x="1" y="2.5" width="11" height="10.5" rx="1" fill="none" stroke="#1a1a1a" stroke-width="1.8"/><rect x="1" y="2.5" width="11" height="3" fill="#1a1a1a"/><path d="M3.3 0.6v2M9.7 0.6v2" stroke="#1a1a1a" stroke-width="1.4"/></svg></div>
<div class="flab" style="left:397.2px;top:92.5px">Loại văn bản</div>
<div class="sel" style="left:397.2px;top:113px"><div class="v">Tất cả</div><svg class="ar" width="12" height="8" viewBox="0 0 12 8"><path d="M0.5 0.8h11L6 7z" fill="#5b6577"/></svg></div>
<div class="flab" style="left:588.8px;top:12px">Trạng thái</div>
<div class="sel" style="left:588.8px;top:33px"><div class="v">Tất cả</div><svg class="ar" width="12" height="8" viewBox="0 0 12 8"><path d="M0.5 0.8h11L6 7z" fill="#5b6577"/></svg></div>
<div class="flab" style="left:588.8px;top:92.5px">Cơ quan ban hành</div>
<div class="sel" style="left:588.8px;top:113px"><div class="v">Tất cả</div><svg class="ar" width="12" height="8" viewBox="0 0 12 8"><path d="M0.5 0.8h11L6 7z" fill="#5b6577"/></svg></div>
<div class="flab" style="left:780.4px;top:12px">Cảnh báo</div>
<div class="sel" style="left:780.4px;top:33px"><div class="v">Tất cả</div><svg class="ar" width="12" height="8" viewBox="0 0 12 8"><path d="M0.5 0.8h11L6 7z" fill="#5b6577"/></svg></div>
<div class="flab" style="left:780.4px;top:92.5px">Lĩnh vực</div>
<div class="sel" style="left:780.4px;top:113px"><div class="v">Tất cả</div><svg class="ar" width="12" height="8" viewBox="0 0 12 8"><path d="M0.5 0.8h11L6 7z" fill="#5b6577"/></svg></div>
<div class="flab" style="left:972.0px;top:12px">Tổ công tác</div>
<div class="sel" style="left:972.0px;top:33px"><div class="v">Tất cả</div><svg class="ar" width="12" height="8" viewBox="0 0 12 8"><path d="M0.5 0.8h11L6 7z" fill="#5b6577"/></svg></div>
<div class="flab" style="left:972.0px;top:92.5px">Lãnh đạo giao việc</div>
<div class="sel" style="left:972.0px;top:113px"><div class="v">Tất cả</div><svg class="ar" width="12" height="8" viewBox="0 0 12 8"><path d="M0.5 0.8h11L6 7z" fill="#5b6577"/></svg></div>
</div>

<!-- TABS -->
<div class="card" id="tabs">
<div class="a" style="left:14px;top:11px;width:110px;height:45px;border:1px solid #dbe4e7;border-bottom:none;border-radius:14px 14px 0 0;background:#fefefe"></div>
<div class="a" style="left:0;top:55.5px;width:1166px;height:1px;background:#dfe7ea"></div>
<div class="tab" style="left:31px;color:#0b3d4a;">Tổng quan</div>
<div class="tab" style="left:150.7px;">Tiến độ &amp; Deadline</div>
<div class="tab" style="left:329.7px;">Lịch công việc</div>
<div class="tab" style="left:479.7px;">Theo Tổ công tác</div>
<div class="tab" style="left:649px;">Theo Cán bộ</div>
<div class="tab" style="left:784px;">Tra cứu văn bản</div>
<div class="a" id="scr" style="left:0;top:56.5px;width:1166px;height:469px;overflow:hidden">
<div class="kpi" style="left:14.75px;top:14px"><div class="kc"></div><div class="kt">Tổng văn bả...</div><div class="ki"><svg class="a" style="left:7px;top:7px" width="24" height="24" viewBox="0 0 24 24"><g fill="none" stroke="#0d4652" stroke-width="2.3" stroke-linejoin="round"><rect x="1.3" y="1.3" width="21.4" height="6.8" rx="1.2"/><path d="M2.6 8.1v13.4a1.3 1.3 0 0 0 1.3 1.3h16.2a1.3 1.3 0 0 0 1.3-1.3V8.1"/><path d="M9.3 13.9h5.4" stroke-linecap="round"/></g></svg></div><div class="kn">99</div><div class="ks">Sau lọc: 99</div></div>
<div class="kpi" style="left:202.60px;top:14px"><div class="kc"></div><div class="kt">Đang xử lý</div><div class="ki"><svg class="a" style="left:0;top:0" width="38" height="38" viewBox="0 0 38 38"><g fill="none" stroke="#0d4652" stroke-width="2.3" stroke-linecap="round" stroke-linejoin="round"><path d="M11 21.6A8.5 8.5 0 0 1 20.8 10.2"/><path d="M19.4 6.9l3.3 3.3-3.3 3.3"/><path d="M26.9 16A8.5 8.5 0 0 1 17.2 27"/><path d="M18.8 23.6l-3.5 3.4 3.5 3.5"/></g></svg></div><div class="kn">86</div><div class="ks">Chưa hoàn thành</div></div>
<div class="kpi" style="left:390.45px;top:14px"><div class="kc"></div><div class="kt">Hoàn thành</div><div class="ki"><svg class="a" style="left:0;top:0" width="38" height="38" viewBox="0 0 38 38"><g fill="none" stroke="#0d4652" stroke-width="2.4" stroke-linecap="round" stroke-linejoin="round"><path d="M28.2 14.5A10 10 0 1 1 24.6 10.8"/><path d="M14.5 18.8l3.6 3.6 9-9"/></g></svg></div><div class="kn">13</div><div class="ks">Tỷ lệ: 13%</div></div>
<div class="kpi" style="left:578.30px;top:14px"><div class="kc r"></div><div class="kt">Quá hạn</div><div class="ki r"><svg class="a" style="left:0;top:0" width="38" height="38" viewBox="0 0 38 38"><g fill="none" stroke="#b03a22" stroke-width="2.3" stroke-linejoin="round"><path d="M19 8L7.3 27.7h23.4z"/></g><path d="M19 15.5v5.5" stroke="#b03a22" stroke-width="2.3" stroke-linecap="round"/><circle cx="19" cy="24" r="1.4" fill="#b03a22"/></svg></div><div class="kn">22</div><div class="ks">Cần ưu tiên xử lý</div></div>
<div class="kpi" style="left:766.15px;top:14px"><div class="kc r"></div><div class="kt">Sắp đến hạn</div><div class="ki r"><svg class="a" style="left:0;top:0" width="38" height="38" viewBox="0 0 38 38"><g fill="none" stroke="#b03a22" stroke-width="2.4" stroke-linecap="round" stroke-linejoin="round"><circle cx="19" cy="19" r="10.4"/><path d="M18.9 14.3v5l3.9 3.9"/></g></svg></div><div class="kn">14</div><div class="ks">Trong 5 ngày tới</div></div>
<div class="kpi" style="left:954.00px;top:14px"><div class="kc"></div><div class="kt">Có cảnh báo</div><div class="ki"><svg class="a" style="left:0;top:0" width="38" height="38" viewBox="0 0 38 38"><g fill="none" stroke="#0d4652" stroke-width="2.3" stroke-linecap="round" stroke-linejoin="round"><path d="M12.6 25.8v-8.6a6.4 6.4 0 0 1 12.8 0v8.6"/><path d="M9.8 26.2h18.4"/><path d="M19 9.2v1.8"/><path d="M19 15.3v4.5"/></g><circle cx="19" cy="23" r="1.3" fill="#0d4652"/><path d="M16.7 29h4.6l-2.3 2.2z" fill="#0d4652"/></svg></div><div class="kn">13</div><div class="ks">Tiến độ TB: 48%</div></div>
<div class="chip r" style="left:14.3px;width:100.0px"><span class="cl">Quá hạn</span><b style="right:12.5px;color:#b5402a">12</b></div>
<div class="chip r" style="left:124.3px;width:145.2px"><span class="cl">Đến hạn hôm nay</span><b style="right:12.5px;color:#b5402a">1</b></div>
<div class="chip r" style="left:279.3px;width:111.1px"><span class="cl">1-3 ngày tới</span><b style="right:12.5px;color:#b5402a">1</b></div>
<div class="chip" style="left:401.6px;width:110.4px"><span class="cl">4-7 ngày tới</span><b style="right:12.5px;color:#111827">1</b></div>
<div class="chip" style="left:523.5px;width:114.8px"><span class="cl">Sau 7 ngày</span><b style="right:12.5px;color:#3e7b78">71</b></div>
<div class="chip" style="left:649.5px;width:116.9px"><span class="cl">Chưa có hạn</span><b style="right:12.5px;color:#111827">0</b></div>
<div class="ccard" style="left:14.9px;top:213.2px;width:360.3px;height:280px;overflow:hidden">
<div class="ct">Cơ cấu trạng thái</div><div class="cs">Phân bố theo trạng thái xử lý</div><div class="sep"></div>
<div class="dot" style="left:79.5px;top:97.5px;background:#3b6d78"></div><div class="lg" style="left:99.5px;top:96.5px">Hoàn thành</div>
<div class="dot" style="left:178.6px;top:97.5px;background:#6a9893"></div><div class="lg" style="left:198.1px;top:96.5px">Chờ duyệt/ký</div>
<div class="dot" style="left:73.1px;top:122.5px;background:#e0907a"></div><div class="lg" style="left:93.1px;top:121.5px">Chờ phối hợp</div>
<div class="dot" style="left:182.0px;top:122.5px;background:#c0665a"></div><div class="lg" style="left:202.1px;top:121.5px">Mới tiếp nhận</div>
<div class="dot" style="left:42.0px;top:147.5px;background:#6e9aa0"></div><div class="lg" style="left:61.5px;top:146.5px">Đã phân công</div>
<div class="dot" style="left:153.6px;top:147.5px;background:#98b9b4"></div><div class="lg" style="left:173.1px;top:146.5px">Đang xử lý</div>
<div class="dot" style="left:246.1px;top:147.5px;background:#ecab9a"></div><div class="lg" style="left:266.1px;top:146.5px">Quá hạn</div>
<div class="dot" style="left:131.4px;top:172.5px;background:#d4968c"></div><div class="lg" style="left:150.9px;top:171.5px">Sắp đến hạn</div>
<svg class="a" style="left:0;top:0" width="360" height="280"><path d="M178.7 200.8A105 105 0 0 1 254.9 233.5L226.4 260.5A65.8 65.8 0 0 0 178.7 240.0Z" fill="#3b6d78" stroke="#fff" stroke-width="2"/><path d="M254.9 233.5A105 105 0 0 1 280.1 278.5L242.2 288.7A65.8 65.8 0 0 0 226.4 260.5Z" fill="#6a9893" stroke="#fff" stroke-width="2"/><path d="M280.1 278.5A105 105 0 0 1 277.1 342.5L240.4 328.8A65.8 65.8 0 0 0 242.2 288.7Z" fill="#e0907a" stroke="#fff" stroke-width="2"/><path d="M277.1 342.5A105 105 0 0 1 214.3 404.6L201.0 367.7A65.8 65.8 0 0 0 240.4 328.8Z" fill="#c0665a" stroke="#fff" stroke-width="2"/><path d="M214.3 404.6A105 105 0 0 1 138.0 402.6L153.2 366.5A65.8 65.8 0 0 0 201.0 367.7Z" fill="#6e9aa0" stroke="#fff" stroke-width="2"/><path d="M138.0 402.6A105 105 0 0 1 73.9 298.7L113.0 301.4A65.8 65.8 0 0 0 153.2 366.5Z" fill="#98b9b4" stroke="#fff" stroke-width="2"/><path d="M73.9 298.7A105 105 0 0 1 106.4 229.6L133.4 258.1A65.8 65.8 0 0 0 113.0 301.4Z" fill="#ecab9a" stroke="#fff" stroke-width="2"/><path d="M106.4 229.6A105 105 0 0 1 178.7 200.8L178.7 240.0A65.8 65.8 0 0 0 133.4 258.1Z" fill="#d4968c" stroke="#fff" stroke-width="2"/></svg>
</div>
<div class="ccard" style="left:390.6px;top:213.2px;width:737.4px;height:280px;overflow:hidden">
<div class="ct">Xu hướng phát sinh theo tháng</div><div class="cs">Tổng số • Hoàn thành • Quá hạn</div><div class="sep"></div>
<div class="dot" style="left:252.2px;top:96.5px;width:16px;height:16px;background:#d5e1e1;border:2px solid #4a7f7d"></div><div class="lg" style="left:274.0px;top:96.5px">Tổng</div>
<div class="dot" style="left:313.9px;top:96.5px;width:17px;height:17px;background:#4a7f7d"></div><div class="lg" style="left:334.4px;top:96.5px">Hoàn thành</div>
<div class="dot" style="left:412.4px;top:96.5px;width:17px;height:17px;background:#b5432a"></div><div class="lg" style="left:433.4px;top:96.5px">Quá hạn</div>
<svg class="a" style="left:0;top:0" width="737" height="280"><line x1="51.1" y1="122.5" x2="51.1" y2="280" stroke="#e6eded" stroke-width="1"/><line x1="106.5" y1="122.5" x2="106.5" y2="280" stroke="#e6eded" stroke-width="1"/><line x1="161.9" y1="122.5" x2="161.9" y2="280" stroke="#e6eded" stroke-width="1"/><line x1="217.2" y1="122.5" x2="217.2" y2="280" stroke="#e6eded" stroke-width="1"/><line x1="272.6" y1="122.5" x2="272.6" y2="280" stroke="#e6eded" stroke-width="1"/><line x1="328.0" y1="122.5" x2="328.0" y2="280" stroke="#e6eded" stroke-width="1"/><line x1="383.4" y1="122.5" x2="383.4" y2="280" stroke="#e6eded" stroke-width="1"/><line x1="438.8" y1="122.5" x2="438.8" y2="280" stroke="#e6eded" stroke-width="1"/><line x1="494.1" y1="122.5" x2="494.1" y2="280" stroke="#e6eded" stroke-width="1"/><line x1="549.5" y1="122.5" x2="549.5" y2="280" stroke="#e6eded" stroke-width="1"/><line x1="604.9" y1="122.5" x2="604.9" y2="280" stroke="#e6eded" stroke-width="1"/><line x1="660.3" y1="122.5" x2="660.3" y2="280" stroke="#e6eded" stroke-width="1"/><line x1="715.7" y1="122.5" x2="715.7" y2="280" stroke="#e6eded" stroke-width="1"/><line x1="44.4" y1="123.3" x2="715.7" y2="123.3" stroke="#e5eded" stroke-width="1"/><line x1="44.4" y1="155.5" x2="715.7" y2="155.5" stroke="#e5eded" stroke-width="1"/><line x1="44.4" y1="187.7" x2="715.7" y2="187.7" stroke="#e5eded" stroke-width="1"/><line x1="44.4" y1="219.9" x2="715.7" y2="219.9" stroke="#e5eded" stroke-width="1"/><line x1="44.4" y1="252.1" x2="715.7" y2="252.1" stroke="#e5eded" stroke-width="1"/><line x1="51.1" y1="122.5" x2="51.1" y2="280" stroke="#d3d9dc" stroke-width="1"/><text x="37.9" y="127.5" text-anchor="end" font-size="13" fill="#6b7280" font-family="Liberation Sans">16</text><text x="37.9" y="159.7" text-anchor="end" font-size="13" fill="#6b7280" font-family="Liberation Sans">14</text><text x="37.9" y="191.9" text-anchor="end" font-size="13" fill="#6b7280" font-family="Liberation Sans">12</text><text x="37.9" y="224.1" text-anchor="end" font-size="13" fill="#6b7280" font-family="Liberation Sans">10</text><text x="37.9" y="256.3" text-anchor="end" font-size="13" fill="#6b7280" font-family="Liberation Sans">8</text><path d="M124.0 290V231.7a10.2 10.2 0 0 1 20.4 0V290" fill="rgba(74,127,125,.22)" stroke="#4a7f7d" stroke-width="2.2"/><path d="M234.7 290V183.4a10.2 10.2 0 0 1 20.4 0V290" fill="rgba(74,127,125,.22)" stroke="#4a7f7d" stroke-width="2.2"/><path d="M456.3 290V135.1a10.2 10.2 0 0 1 20.4 0V290" fill="rgba(74,127,125,.22)" stroke="#4a7f7d" stroke-width="2.2"/><path d="M567.0 290V263.1a10.2 10.2 0 0 1 20.4 0V290" fill="rgba(74,127,125,.22)" stroke="#4a7f7d" stroke-width="2.2"/><path d="M677.8 290V263.1a10.2 10.2 0 0 1 20.4 0V290" fill="rgba(74,127,125,.22)" stroke="#4a7f7d" stroke-width="2.2"/></svg>
</div>
</div>
<svg class="a" style="left:1147px;top:63px" width="15" height="12" viewBox="0 0 15 12"><path d="M1.8 10.5L7.5 2.2l5.7 8.3z" fill="#888" stroke="#888" stroke-width="1.6" stroke-linejoin="round"/></svg>
<div class="a" style="left:1148px;top:83.5px;width:13px;height:151px;border-radius:6.5px;background:#8a8a8a"></div>
<svg class="a" style="left:1147px;top:507px" width="15" height="12" viewBox="0 0 15 12"><path d="M1.8 1.5L7.5 9.8l5.7-8.3z" fill="#888" stroke="#888" stroke-width="1.6" stroke-linejoin="round"/></svg>
</div>

</div>
</div>
</body></html>
